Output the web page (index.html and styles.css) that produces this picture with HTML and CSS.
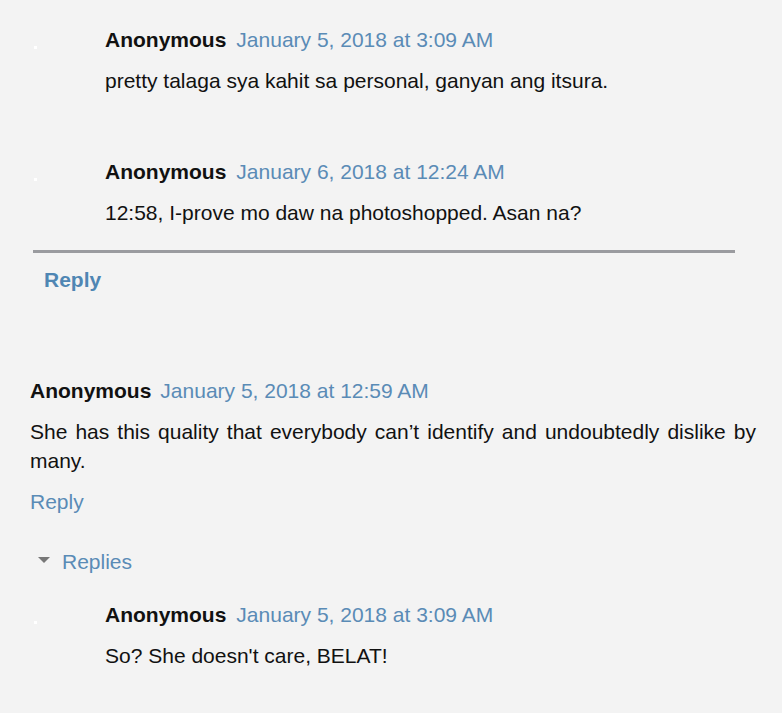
FILE: index.html
```html
<!DOCTYPE html>
<html>
<head>
<meta charset="utf-8">
<link rel="stylesheet" href="styles.css">
</head>
<body>
<div class="page">
  <div class="thread">
    <div class="reply-comment">
      <div class="avatar"><span class="dot"></span></div>
      <div class="content">
        <div class="header"><span class="user">Anonymous</span><a class="date">January 5, 2018 at 3:09 AM</a></div>
        <p class="body">pretty talaga sya kahit sa personal, ganyan ang itsura.</p>
      </div>
    </div>
    <div class="reply-comment gap">
      <div class="avatar"><span class="dot"></span></div>
      <div class="content">
        <div class="header"><span class="user">Anonymous</span><a class="date">January 6, 2018 at 12:24 AM</a></div>
        <p class="body">12:58, I-prove mo daw na photoshopped. Asan na?</p>
      </div>
    </div>
    <div class="rule"></div>
    <a class="thread-reply">Reply</a>
  </div>

  <div class="comment">
    <div class="header top"><span class="user">Anonymous</span><a class="date">January 5, 2018 at 12:59 AM</a></div>
    <p class="body justify">She has this quality that everybody can’t identify and undoubtedly dislike by many.</p>
    <a class="reply-link">Reply</a>
    <div class="replies-toggle"><span class="tri"></span><a class="replies">Replies</a></div>
    <div class="thread nested">
      <div class="reply-comment">
        <div class="avatar"><span class="dot"></span></div>
        <div class="content">
          <div class="header"><span class="user">Anonymous</span><a class="date">January 5, 2018 at 3:09 AM</a></div>
          <p class="body">So? She doesn't care, BELAT!</p>
        </div>
      </div>
    </div>
  </div>
</div>
</body>
</html>
```

FILE: styles.css
```css
html, body {
  margin: 0;
  padding: 0;
  background: #f3f3f3;
}
body {
  font-family: "Liberation Sans", Arial, sans-serif;
  font-size: 21px;
  line-height: 29px;
  color: #111;
}
.page {
  padding: 25px 26px 0 30px;
}
.thread {
  padding-left: 3px;
  width: 702px;
}
.reply-comment {
  display: flex;
}
.reply-comment.gap {
  margin-top: 62px;
}
.avatar {
  width: 72px;
  flex: none;
  position: relative;
}
.dot {
  position: absolute;
  left: 1px;
  top: 21px;
  width: 3px;
  height: 3px;
  background: #ffffff;
}
.content {
  flex: 1;
}
.header {
  display: flex;
  gap: 10px;
  white-space: nowrap;
}
.header.top {
  gap: 9px;
}
.user {
  font-weight: bold;
  color: #111;
}
.date {
  color: #5a8bb6;
}
.body {
  margin: 12px 0 0;
}
.justify {
  text-align: justify;
}
.rule {
  margin-top: 23px;
  height: 3px;
  background: #9a9b9f;
}
.thread-reply {
  display: block;
  margin-top: 12px;
  padding-left: 11px;
  font-weight: bold;
  color: #4f86b3;
}
.comment {
  margin-top: 82px;
}
.reply-link {
  display: block;
  margin-top: 12px;
  color: #5a8bb6;
}
.replies-toggle {
  display: flex;
  align-items: center;
  margin-top: 31px;
  padding-left: 8px;
}
.tri {
  width: 0;
  height: 0;
  border-left: 6px solid transparent;
  border-right: 6px solid transparent;
  border-top: 6px solid #777;
  margin-right: 12px;
  margin-top: -4px;
}
.replies {
  color: #5a8bb6;
}
.thread.nested {
  margin-top: 24px;
  padding-left: 3px;
}
```
